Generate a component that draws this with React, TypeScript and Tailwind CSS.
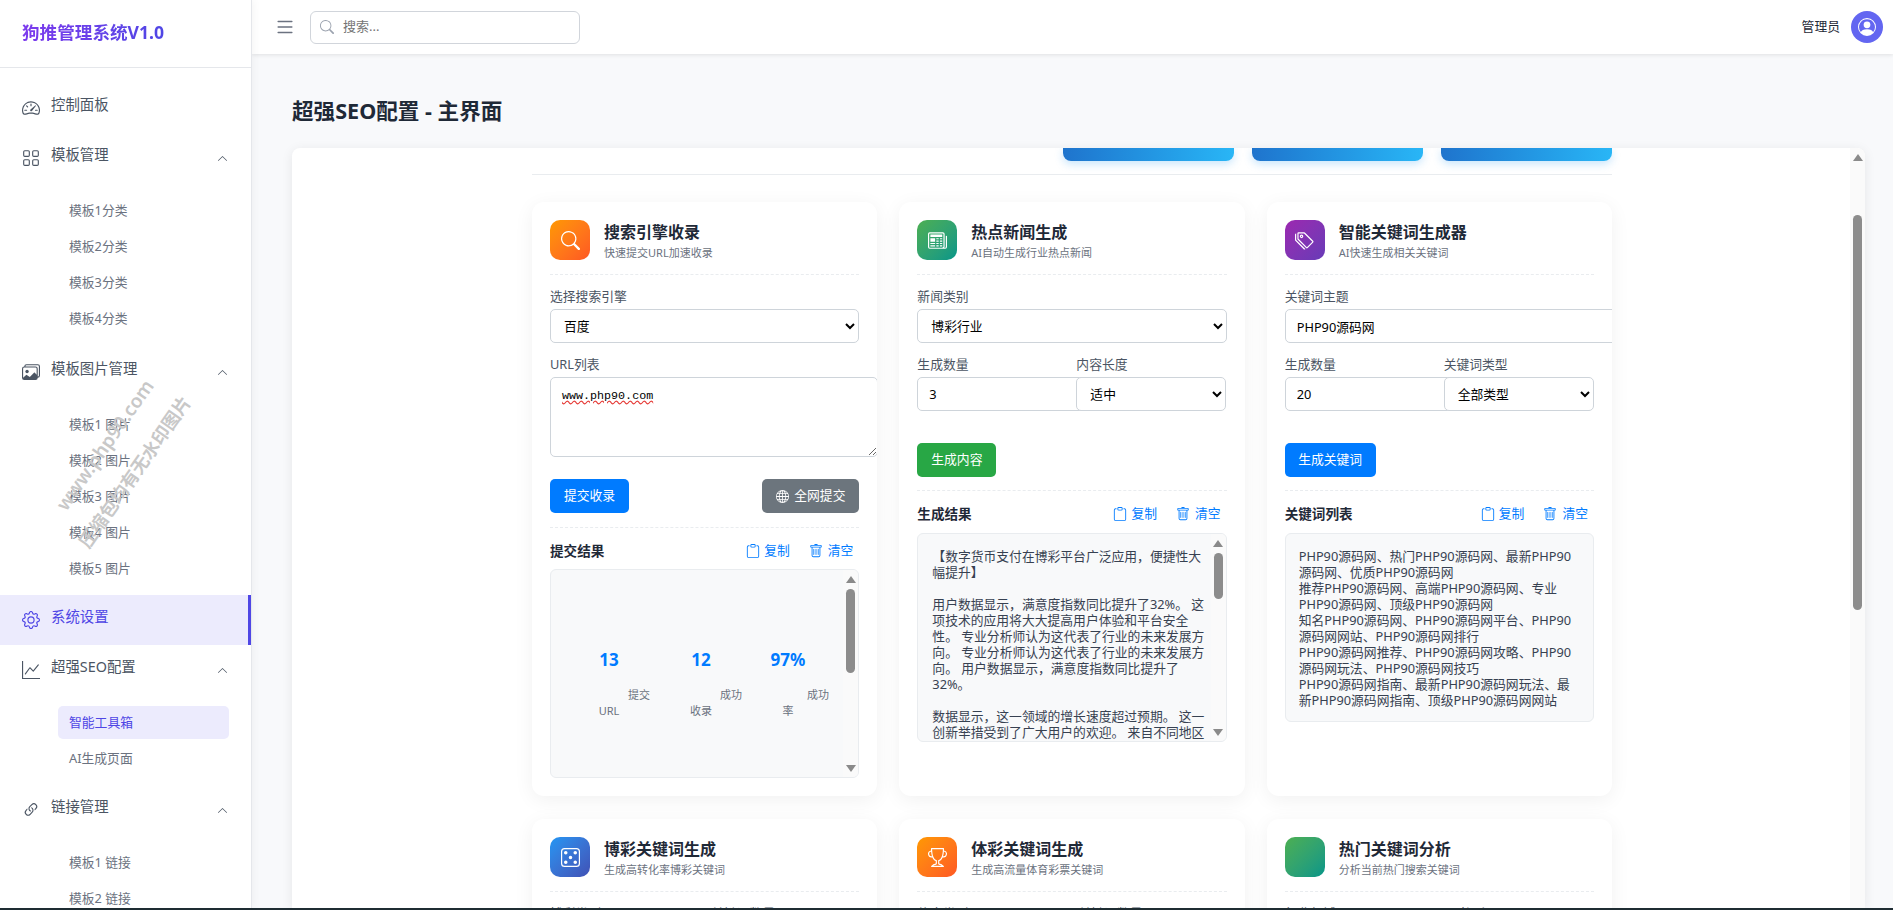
import type { ReactNode } from 'react';
import {
  BsChevronUp,
  BsClipboard,
  BsDice5,
  BsGear,
  BsGlobe,
  BsGraphUp,
  BsGrid,
  BsImages,
  BsLink45Deg,
  BsList,
  BsNewspaper,
  BsPersonCircle,
  BsSearch,
  BsSpeedometer2,
  BsTags,
  BsTrash,
  BsTrophy,
} from 'react-icons/bs';

const fontStack = "font-['Noto_Sans','Noto_Sans_CJK_SC',sans-serif]";

function NavRow({ icon, label, open, active }: { icon: ReactNode; label: string; open?: boolean; active?: boolean }) {
  return (
    <div
      className={`flex h-[50px] items-center pl-[22px] pr-[23px] ${
        active ? 'border-r-[3px] border-[#4f46e5] bg-[#ecebfd] text-[#4f46e5]' : 'text-[#4b5563]'
      }`}
    >
      <span className="flex w-[18px] justify-center text-[18px]">{icon}</span>
      <span className="mb-[6px] ml-[11px] text-[14.4px] leading-5">{label}</span>
      {open && <BsChevronUp className="ml-auto text-[11px]" />}
    </div>
  );
}

function SubList({ items, active, tail = 'pb-[7px]' }: { items: string[]; active?: string; tail?: string }) {
  return (
    <div className={`pl-[58px] pr-[22px] pt-[11px] ${tail}`}>
      {items.map((item) => (
        <div
          key={item}
          className={`mb-[3px] flex h-[33px] items-center rounded-[5px] pl-[11px] text-[12.8px] ${
            item === active ? 'bg-[#ecebfd] text-[#4f46e5]' : 'text-[#6b7280]'
          }`}
        >
          {item}
        </div>
      ))}
    </div>
  );
}

function Sidebar() {
  return (
    <aside className="z-10 flex w-[252px] shrink-0 flex-col overflow-hidden border-r border-[#e5e7eb] bg-white shadow-[2px_0_8px_rgba(0,0,0,0.04)]">
      <div className="flex h-[68px] shrink-0 items-start border-b border-[#e5e7eb] pl-[22px] pt-[20px]">
        <span className="bg-gradient-to-r from-[#7c3aed] to-[#4f46e5] bg-clip-text text-[17.6px] font-bold leading-6 text-transparent">
          狗推管理系统V1.0
        </span>
      </div>
      <nav className="pt-[15px]">
        <NavRow icon={<BsSpeedometer2 />} label="控制面板" />
        <NavRow icon={<BsGrid />} label="模板管理" open />
        <SubList items={['模板1分类', '模板2分类', '模板3分类', '模板4分类']} tail="pb-[9px]" />
        <NavRow icon={<BsImages />} label="模板图片管理" open />
        <SubList items={['模板1 图片', '模板2 图片', '模板3 图片', '模板4 图片', '模板5 图片']} />
        <NavRow icon={<BsGear />} label="系统设置" active />
        <NavRow icon={<BsGraphUp />} label="超强SEO配置" open />
        <SubList items={['智能工具箱', 'AI生成页面']} active="智能工具箱" />
        <NavRow icon={<BsLink45Deg />} label="链接管理" open />
        <SubList items={['模板1 链接', '模板2 链接', '模板3 链接']} />
      </nav>
    </aside>
  );
}

function Topbar() {
  return (
    <header className="z-[5] flex h-[54px] shrink-0 items-center bg-white pl-[22px] pr-[10px] shadow-[0_1px_4px_rgba(0,0,0,0.1)]">
      <BsList className="text-[22px] text-[#6b7280]" />
      <div className="ml-[14px] flex h-[33px] w-[270px] items-center rounded-[6px] border border-[#d1d5db] pl-[9px] text-[13px] text-[#757575]">
        <BsSearch className="text-[14px] text-[#9ca3af]" />
        <span className="ml-[9px]">搜索...</span>
      </div>
      <span className="ml-auto text-[12.8px] text-[#1f2937]">管理员</span>
      <div className="ml-[11px] flex size-8 items-center justify-center rounded-full bg-[#6366f1] text-[18px] text-white">
        <BsPersonCircle />
      </div>
    </header>
  );
}

function ScrollTrack({ thumb, bottomArrow = true, className = '' }: { thumb: string; bottomArrow?: boolean; className?: string }) {
  return (
    <div className={`flex w-[15px] shrink-0 flex-col items-center bg-[#fafafa] pb-[5px] pt-[6px] ${className}`}>
      <svg viewBox="0 0 10 7" className="h-[7px] w-[10px] shrink-0 fill-[#8a8a8a]">
        <path d="M5 0 10 7H0Z" />
      </svg>
      <div className={`w-[9px] shrink-0 rounded-[5px] bg-[#8c8c8c] ${thumb}`} />
      {bottomArrow && (
        <svg viewBox="0 0 10 7" className="mt-auto h-[7px] w-[10px] shrink-0 fill-[#8a8a8a]">
          <path d="M0 0H10L5 7Z" />
        </svg>
      )}
    </div>
  );
}

function ToolCard({ icon, gradient, title, sub, children }: { icon: ReactNode; gradient: string; title: string; sub: string; children?: ReactNode }) {
  return (
    <div className="overflow-hidden rounded-xl bg-white p-[18px] shadow-[0_4px_20px_rgba(0,0,0,0.06)]">
      <div className="flex h-[55px] border-b border-dashed border-[#e9ecef]">
        <div className={`flex size-10 shrink-0 items-center justify-center rounded-[10px] bg-gradient-to-br text-[19px] text-white ${gradient}`}>
          {icon}
        </div>
        <div className="ml-[14px]">
          <h3 className="mt-[1px] text-[16px] font-semibold leading-[22px] text-[#1f2937]">{title}</h3>
          <p className="mt-[2px] text-[11px] leading-4 text-[#6b7280]">{sub}</p>
        </div>
      </div>
      {children}
    </div>
  );
}

const fieldClass = 'h-[34px] rounded-[5px] border border-[#ced4da] bg-white text-[12.8px] text-black outline-none';

function Label({ children }: { children: ReactNode }) {
  return <label className="mb-[4px] mt-[12px] block text-[12.8px] leading-[18px] text-[#4b5563]">{children}</label>;
}

function Picker({ value, className = '' }: { value: string; className?: string }) {
  return (
    <select defaultValue={value} className={`${fieldClass} block pl-[9px] pr-[4px] ${className}`}>
      <option>{value}</option>
    </select>
  );
}

function DoubleField({ a, b, value, pick }: { a: string; b: string; value: string; pick: string }) {
  return (
    <div className="grid grid-cols-[159px_150px]">
      <div>
        <Label>{a}</Label>
        <input defaultValue={value} className={`${fieldClass} block w-[170px] px-[11px]`} />
      </div>
      <div className="relative">
        <Label>{b}</Label>
        <Picker value={pick} className="w-[150px]" />
      </div>
    </div>
  );
}

function ResultHead({ title, className = 'mb-[9px] mt-[14px]' }: { title: string; className?: string }) {
  return (
    <div className={`flex h-[18px] items-center pr-[6px] ${className}`}>
      <strong className="text-[13.6px] font-semibold text-[#1f2937]">{title}</strong>
      <span className="ml-auto flex items-center text-[12.8px] text-[#007bff]">
        <BsClipboard className="mr-[4px] text-[14px]" />
        复制
        <BsTrash className="ml-[19px] mr-[5px] text-[14px]" />
        清空
      </span>
    </div>
  );
}

function Stat({ value, top, bottom, width }: { value: string; top: string; bottom: string; width: string }) {
  return (
    <div className={`${width} shrink-0 text-center`}>
      <div className="text-[17px] font-bold leading-6 text-[#007bff]">{value}</div>
      <div className="mt-[15px] text-[11px] leading-4 text-[#6b7280]">
        <div className="pl-[60px]">{top}</div>
        <div>{bottom}</div>
      </div>
    </div>
  );
}

const keywordLines = [
  'PHP90源码网、热门PHP90源码网、最新PHP90源码网、优质PHP90源码网',
  '推荐PHP90源码网、高端PHP90源码网、专业PHP90源码网、顶级PHP90源码网',
  '知名PHP90源码网、PHP90源码网平台、PHP90源码网网站、PHP90源码网排行',
  'PHP90源码网推荐、PHP90源码网攻略、PHP90源码网玩法、PHP90源码网技巧',
  'PHP90源码网指南、最新PHP90源码网玩法、最新PHP90源码网指南、顶级PHP90源码网网站',
];

const newsBlocks = [
  '【数字货币支付在博彩平台广泛应用，便捷性大幅提升】',
  '用户数据显示，满意度指数同比提升了32%。 这项技术的应用将大大提高用户体验和平台安全性。 专业分析师认为这代表了行业的未来发展方向。 专业分析师认为这代表了行业的未来发展方向。 用户数据显示，满意度指数同比提升了32%。',
  '数据显示，这一领域的增长速度超过预期。 这一创新举措受到了广大用户的欢迎。 来自不同地区的用户纷纷表示支持。',
];

function App() {
  return (
    <div className={`relative flex h-screen w-screen flex-col overflow-hidden bg-[#f8f9fb] ${fontStack}`}>
      <div className="flex min-h-0 flex-1">
        <Sidebar />
        <main className="flex min-w-0 flex-1 flex-col">
          <Topbar />
          <h1 className="ml-[40px] mt-[42px] shrink-0 text-[21.6px] font-bold leading-[30px] text-[#1f2937]">超强SEO配置 - 主界面</h1>
          <section className="ml-[40px] mr-[28px] mt-[22px] flex min-h-0 flex-1 overflow-hidden rounded-t-[8px] bg-white shadow-[0_2px_12px_rgba(0,0,0,0.08)]">
            <div className="min-w-0 flex-1 overflow-hidden">
              <div className="ml-[240px] w-[1080px]">
                <div className="flex justify-end gap-[18px] border-b border-[#e9ecef] pb-[13px]">
                  <div className="h-[13px] w-[171px] rounded-b-[8px] bg-gradient-to-r from-[#1f74cd] to-[#29b6f6] shadow-[0_3px_8px_rgba(33,150,243,0.25)]" />
                  <div className="h-[13px] w-[171px] rounded-b-[8px] bg-gradient-to-r from-[#1f74cd] to-[#29b6f6] shadow-[0_3px_8px_rgba(33,150,243,0.25)]" />
                  <div className="h-[13px] w-[171px] rounded-b-[8px] bg-gradient-to-r from-[#1f74cd] to-[#29b6f6] shadow-[0_3px_8px_rgba(33,150,243,0.25)]" />
                </div>
                <div className="mt-[27px] grid grid-cols-3 gap-x-[22px] gap-y-[23px]">
                  <ToolCard icon={<BsSearch />} gradient="from-[#ff9800] to-[#ff5722]" title="搜索引擎收录" sub="快速提交URL加速收录">
                    <Label>选择搜索引擎</Label>
                    <Picker value="百度" className="w-full" />
                    <Label>URL列表</Label>
                    <textarea
                      defaultValue="www.php90.com"
                      spellCheck={false}
                      className="block h-[80px] w-[328px] rounded-[5px] border border-[#ced4da] px-[11px] py-[10px] font-['Liberation_Mono',monospace] text-[11.7px] leading-4 text-black underline decoration-[#e53935] decoration-wavy outline-none"
                    />
                    <div className="mt-[22px] flex justify-between border-b border-dashed border-[#e9ecef] pb-[14px]">
                      <button className="h-[34px] w-[79px] rounded-[5px] bg-[#007bff] text-[12.8px] text-white">提交收录</button>
                      <button className="flex h-[34px] w-[97px] items-center justify-center rounded-[5px] bg-[#6c757d] text-[12.8px] text-white">
                        <BsGlobe className="mr-[5px] text-[13px]" />
                        全网提交
                      </button>
                    </div>
                    <ResultHead title="提交结果" />
                    <div className="flex h-[209px] overflow-hidden rounded-[6px] border border-[#e9ecef] bg-[#f8f9fa]">
                      <div className="flex flex-1 pl-[12px] pt-[78px]">
                        <Stat value="13" top="提交" bottom="URL" width="w-[92px]" />
                        <Stat value="12" top="成功" bottom="收录" width="w-[92px]" />
                        <Stat value="97%" top="成功" bottom="率" width="w-[82px]" />
                      </div>
                      <ScrollTrack thumb="mt-[6px] h-[84px]" />
                    </div>
                  </ToolCard>

                  <ToolCard icon={<BsNewspaper />} gradient="from-[#4caf50] to-[#009688]" title="热点新闻生成" sub="AI自动生成行业热点新闻">
                    <Label>新闻类别</Label>
                    <Picker value="博彩行业" className="w-full" />
                    <DoubleField a="生成数量" b="内容长度" value="3" pick="适中" />
                    <div className="mt-[32px] border-b border-dashed border-[#e9ecef] pb-[13px]">
                      <button className="h-[34px] w-[79px] rounded-[5px] bg-[#28a745] text-[12.8px] text-white">生成内容</button>
                    </div>
                    <ResultHead title="生成结果" className="mb-[10px] mt-[14px]" />
                    <div className="flex h-[209px] overflow-hidden rounded-[6px] border border-[#e9ecef] bg-[#f8f9fa]">
                      <div className="min-w-0 flex-1 overflow-hidden pl-[14px] pr-[6px] pt-[14px] text-[12.8px] leading-4 text-[#374151]">
                        {newsBlocks.map((block) => (
                          <p key={block} className="mb-4">
                            {block}
                          </p>
                        ))}
                      </div>
                      <ScrollTrack thumb="mt-[6px] h-[46px]" />
                    </div>
                  </ToolCard>

                  <ToolCard icon={<BsTags />} gradient="from-[#9c27b0] to-[#673ab7]" title="智能关键词生成器" sub="AI快速生成相关关键词">
                    <Label>关键词主题</Label>
                    <input defaultValue="PHP90源码网" className={`${fieldClass} block w-[340px] px-[11px]`} />
                    <DoubleField a="生成数量" b="关键词类型" value="20" pick="全部类型" />
                    <div className="mt-[32px] border-b border-dashed border-[#e9ecef] pb-[13px]">
                      <button className="h-[34px] w-[91px] rounded-[5px] bg-[#007bff] text-[12.8px] text-white">生成关键词</button>
                    </div>
                    <ResultHead title="关键词列表" className="mb-[10px] mt-[14px]" />
                    <div className="h-[189px] rounded-[6px] border border-[#e9ecef] bg-[#f8f9fa] px-[13px] pt-[14px] text-[12.8px] leading-4 text-[#374151]">
                      {keywordLines.map((line) => (
                        <div key={line}>{line}</div>
                      ))}
                    </div>
                  </ToolCard>

                  <ToolCard icon={<BsDice5 />} gradient="from-[#2196f3] to-[#3f51b5]" title="博彩关键词生成" sub="生成高转化率博彩关键词">
                    <div className="flex gap-[110px]">
                      <Label>博彩类型</Label>
                      <Label>关键词数量</Label>
                    </div>
                  </ToolCard>
                  <ToolCard icon={<BsTrophy />} gradient="from-[#ff9800] to-[#ff5722]" title="体彩关键词生成" sub="生成高流量体育彩票关键词">
                    <div className="flex gap-[110px]">
                      <Label>体育类型</Label>
                      <Label>关键词数量</Label>
                    </div>
                  </ToolCard>
                  <ToolCard icon={null} gradient="from-[#4caf50] to-[#009688]" title="热门关键词分析" sub="分析当前热门搜索关键词">
                    <div className="flex gap-[117px]">
                      <Label>行业领域</Label>
                      <Label>时间段</Label>
                    </div>
                  </ToolCard>
                </div>
              </div>
            </div>
            <ScrollTrack thumb="mt-[54px] h-[395px]" bottomArrow={false} />
          </section>
        </main>
      </div>
      <div className="h-[2px] shrink-0 bg-[#1f2d33]" />

      {/* watermark baked into the screenshot */}
      <span className="absolute left-[105px] top-[445px] z-20 -translate-x-1/2 -translate-y-1/2 -rotate-[55deg] whitespace-nowrap text-[19px] font-semibold text-[#c8c8c8]">
        www.php90.com
      </span>
      <span className="absolute left-[135px] top-[472px] z-20 -translate-x-1/2 -translate-y-1/2 -rotate-[55deg] whitespace-nowrap text-[18px] font-semibold text-[#c8c8c8]">
        压缩包均有无水印图片
      </span>
    </div>
  );
}

export default App;
